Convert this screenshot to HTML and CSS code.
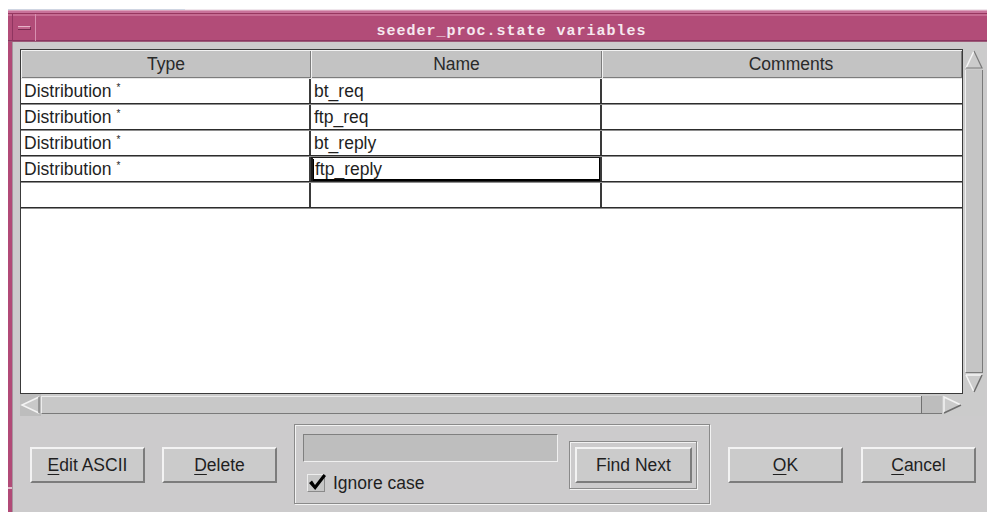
FILE: index.html
```html
<!DOCTYPE html>
<html lang="en">
<head>
<meta charset="utf-8">
<title>seeder_proc.state variables</title>
<link rel="stylesheet" href="styles.css">
</head>
<body>
<div class="desk-edge"></div>
<div class="window">
  <div class="titlebar">
    <div class="menu-btn"><span class="menu-bar"></span></div>
    <div class="title">seeder_proc.state variables</div>
  </div>
  <div class="main">
    <div class="side"></div>
    <div class="client">
      <div class="table">
        <div class="sheet">
          <div class="head">
            <div class="hcell">Type</div>
            <div class="hcell">Name</div>
            <div class="hcell hcell-last">Comments</div>
          </div>
          <div class="row">
            <div class="cell">Distribution <sup class="star">*</sup></div>
            <div class="cell">bt_req</div>
            <div class="cell cell-last"></div>
          </div>
          <div class="row">
            <div class="cell">Distribution <sup class="star">*</sup></div>
            <div class="cell">ftp_req</div>
            <div class="cell cell-last"></div>
          </div>
          <div class="row">
            <div class="cell">Distribution <sup class="star">*</sup></div>
            <div class="cell">bt_reply</div>
            <div class="cell cell-last"></div>
          </div>
          <div class="row">
            <div class="cell">Distribution <sup class="star">*</sup></div>
            <div class="cell sel"><span class="caret"></span>ftp_reply</div>
            <div class="cell cell-last"></div>
          </div>
          <div class="row">
            <div class="cell"></div>
            <div class="cell"></div>
            <div class="cell cell-last"></div>
          </div>
        </div>
        <div class="vscroll">
          <svg class="arrow" width="22" height="21" viewBox="0 0 22 21">
            <polyline points="3,19 11,2" fill="none" stroke="#f6f6f6" stroke-width="1.5"/>
            <polyline points="11,2 19,19 3,19" fill="none" stroke="#7a7a7a" stroke-width="1.2"/>
          </svg>
          <div class="vtrack"></div>
          <svg class="arrow" width="22" height="21" viewBox="0 0 22 21">
            <polyline points="3,2 19,2" fill="none" stroke="#f6f6f6" stroke-width="1.5"/>
            <polyline points="3,2 11,19" fill="none" stroke="#f6f6f6" stroke-width="1.5"/>
            <polyline points="11,19 19,2" fill="none" stroke="#6e6e6e" stroke-width="1.5"/>
          </svg>
        </div>
        <div class="hscroll">
          <svg class="arrow" width="21" height="22" viewBox="0 0 21 22">
            <rect x="0" y="0" width="21" height="22" fill="#bdbdbd"/>
            <polygon points="2,11 19,3 19,19" fill="#c9c9c9"/>
            <polyline points="19,3 2,11 19,19" fill="none" stroke="#f4f4f4" stroke-width="1.5"/>
            <polyline points="19,3 19,19" fill="none" stroke="#777" stroke-width="1.2"/>
          </svg>
          <div class="htrack"></div>
          <div class="hthumb"></div>
          <svg class="arrow" width="21" height="22" viewBox="0 0 21 22">
            <polyline points="2,19 2,3 19,11" fill="none" stroke="#f4f4f4" stroke-width="1.5"/>
            <polyline points="19,11 2,19" fill="none" stroke="#6e6e6e" stroke-width="1.5"/>
          </svg>
        </div>
        <div class="corner"></div>
      </div>

      <div class="actions">
        <button class="btn btn-edit" type="button"><span class="mn">E</span>dit ASCII</button>
        <button class="btn btn-gap" type="button"><span class="mn">D</span>elete</button>
        <div class="find">
          <div class="find-left">
            <div class="search"></div>
            <label class="check-row">
              <span class="checkbox">
                <svg class="tick" width="20" height="20" viewBox="0 0 20 20">
                  <path d="M2 10 L5 7.5 L8 12 L16.5 1 L19 3 L8.2 17 Z" fill="#000"/>
                </svg>
              </span>
              <span>Ignore case</span>
            </label>
          </div>
          <div class="find-frame">
            <button class="btn btn-find" type="button">Find Next</button>
          </div>
        </div>
        <button class="btn btn-gap2" type="button"><span class="mn">O</span>K</button>
        <button class="btn btn-gap2" type="button"><span class="mn">C</span>ancel</button>
      </div>
    </div>
  </div>
</div>
</body>
</html>
```
FILE: styles.css
```css
* {
  box-sizing: border-box;
}

html,
body {
  margin: 0;
  padding: 0;
  background: #ffffff;
}

body {
  width: 987px;
  height: 512px;
  overflow: hidden;
  font-family: "Liberation Sans", Arial, sans-serif;
  font-size: 17.5px;
  color: #1f1f1f;
}

/* thin edge of whatever sits behind the window */
.desk-edge {
  height: 10px;
  background:
    linear-gradient(to right, transparent 0 8px, #cfd5e2 8px 185px, #efe6ec 185px) left bottom / 100% 1px no-repeat;
}

.window {
  margin-left: 8px;
  height: 502px;
  display: flex;
  flex-direction: column;
}

/* ---------- title bar ---------- */
.titlebar {
  flex: none;
  height: 32px;
  display: flex;
  padding-top: 4px;
  background: linear-gradient(to bottom,
      #dca2bc 0 1px,
      #c8729a 1px 3px,
      #96375f 3px 4px,
      #c66b92 4px 6px,
      #b24c78 6px 30px,
      #8a3560 30px 31px,
      #9c5a78 31px 32px);
}

.menu-btn {
  width: 24px;
  height: 27px;
  margin-left: 4px;
  border-left: 1px solid #8f3560;
  border-right: 1px solid #d890b0;
  padding: 12px 0 0 5px;
}

.menu-bar {
  display: block;
  width: 13px;
  height: 4px;
  background: #c2648c;
  border-top: 1px solid #e6b2c8;
  border-bottom: 1px solid #7a2a50;
  border-right: 1px solid #7a2a50;
}

.title {
  flex: 1;
  text-align: center;
  font-family: "Liberation Mono", "DejaVu Sans Mono", monospace;
  font-weight: bold;
  font-size: 15px;
  letter-spacing: 1px;
  line-height: 17px;
  padding-top: 9px;
  color: #f6e8ef;
}

/* ---------- window body ---------- */
.main {
  flex: 1;
  display: flex;
}

.side {
  width: 4px;
  background: linear-gradient(to bottom, #b14a77 0 445px, #e2bccb 445px 447px, #b14a77 447px);
}

.client {
  flex: 1;
  background: #cccbcc;
  border-left: 1px solid #a8949e;
  padding: 7px 0 0 7px;
}

.table {
  display: grid;
  grid-template-columns: 943px 22px;
  grid-template-rows: 345px 22px;
}

/* ---------- spreadsheet ---------- */
.sheet {
  background: #ffffff;
  border: 1px solid #3a3a3a;
  overflow: hidden;
}

.head {
  display: grid;
  grid-template-columns: 290px 291px 1fr;
  height: 29px;
  background: #c3c3c3;
}

.hcell {
  text-align: center;
  line-height: 28px;
  color: #2a2a2a;
  box-shadow: inset 1px 1px 0 #f2f2f2, inset -1px -1px 0 #7c7c7c;
  border-bottom: 1px solid #e6e6e6;
}

.hcell-last {
  padding-left: 18px;
}

.row {
  display: grid;
  grid-template-columns: 290px 291px 1fr;
  height: 26px;
  background: linear-gradient(to bottom, #ffffff 0 24px, #2c2c2c 24px 25px, #8e8e8e 25px 26px);
}

.cell {
  height: 24px;
  line-height: 24px;
  padding-left: 3px;
  white-space: nowrap;
  overflow: hidden;
  border-right: 2px solid #3a3a3a;
}

.cell-last {
  border-right: none;
}

.star {
  font-size: 10px;
  vertical-align: 6px;
  line-height: 0;
}

.cell.sel {
  padding-left: 2px;
  box-shadow: inset 2px 1px 0 #1a1a1a, inset -1px -2px 0 #000;
  display: flex;
  align-items: center;
}

.caret {
  width: 1px;
  height: 20px;
  margin-right: 1px;
  background: #000;
}

/* ---------- scroll bars ---------- */
.arrow {
  display: block;
  flex: none;
}

.vscroll {
  display: flex;
  flex-direction: column;
  background: #cbcbcb;
}

.vtrack {
  flex: 1;
  margin: 0 2px 0 2px;
  background: #c5c5c5;
  border-left: 1px solid #efefef;
  border-right: 1px solid #7a7a7a;
  border-bottom: 1px solid #7a7a7a;
}

.hscroll {
  display: flex;
  background: #cbcbcb;
}

.htrack {
  flex: 1;
  margin: 2px 0;
  background: #c8c8c8;
  border-top: 1px solid #ececec;
  border-left: 1px solid #ececec;
  border-bottom: 1px solid #7a7a7a;
}

.hthumb {
  width: 21px;
  margin: 2px 0;
  background: #bdbdbd;
  border-left: 1px solid #707070;
  border-bottom: 1px solid #7a7a7a;
}

.corner {
  background: #cbcbcb;
}

/* ---------- button row ---------- */
.actions {
  display: flex;
  align-items: flex-start;
  padding-top: 8px;
}

.btn {
  width: 115px;
  height: 36px;
  padding: 0;
  margin-top: 23px;
  background: #cbcbcb;
  border: 2px solid;
  border-color: #f3f3f3 #7c7c7c #7c7c7c #f3f3f3;
  font-family: inherit;
  font-size: 17.5px;
  color: #1f1f1f;
  display: flex;
  align-items: center;
  justify-content: center;
}

.btn-edit {
  margin-left: 10px;
}

.btn-gap {
  margin-left: 17px;
}

.btn-gap2 {
  margin-left: 18px;
}

.mn {
  text-decoration: underline;
  text-underline-offset: 3px;
  text-decoration-thickness: 1px;
}

.find {
  width: 416px;
  height: 80px;
  margin-left: 17px;
  border: 1px solid #8a8a8a;
  box-shadow: inset 1px 1px 0 #f2f2f2, 1px 1px 0 #f2f2f2;
  display: flex;
  align-items: flex-start;
  padding: 9px 0 0 8px;
}

.find-left {
  display: flex;
  flex-direction: column;
}

.search {
  width: 255px;
  height: 28px;
  background: #bebebe;
  border: 1px solid;
  border-color: #808080 #f0f0f0 #f0f0f0 #808080;
}

.check-row {
  display: flex;
  align-items: center;
  gap: 8px;
  margin: 11px 0 0 4px;
  line-height: 20px;
}

.checkbox {
  position: relative;
  width: 18px;
  height: 18px;
  background: #c6c6c6;
  border: 1px solid;
  border-color: #ededed #8a8a8a #8a8a8a #ededed;
}

.tick {
  position: absolute;
  left: -1px;
  top: -2px;
}

.find-frame {
  width: 128px;
  height: 48px;
  margin: 7px 0 0 11px;
  border: 1px solid #8a8a8a;
  box-shadow: inset 1px 1px 0 #f2f2f2, 1px 1px 0 #f2f2f2;
  padding: 5px 0 0 5px;
}

.btn-find {
  width: 117px;
  margin-top: 0;
}
```
